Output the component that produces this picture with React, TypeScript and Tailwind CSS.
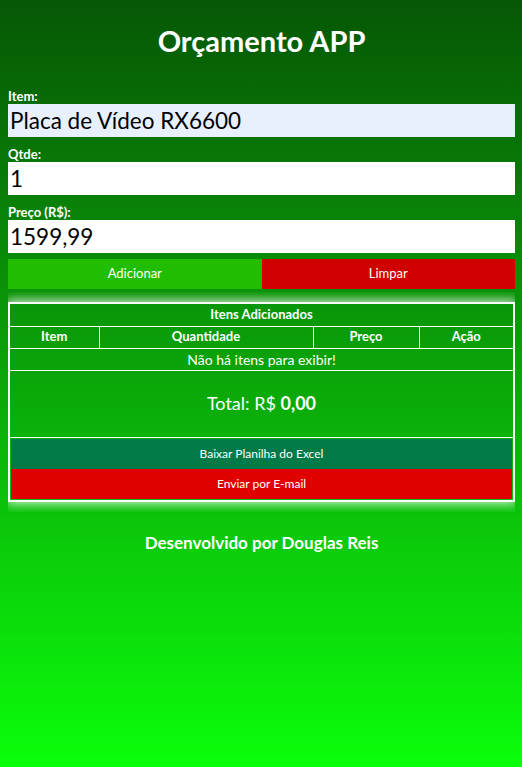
import React from "react"

const font = { fontFamily: "Lato, 'Open Sans', sans-serif" }

function Field({ label, value, autofill }: { label: string; value: string; autofill?: boolean }) {
  return (
    <div className="flex flex-col">
      <label className="text-[13px] font-bold leading-[16px] text-white">{label}</label>
      <input
        readOnly
        value={value}
        className={`h-[33px] w-full px-[2px] text-[22.5px] text-black outline-none ${autofill ? "bg-[#e8f0fe]" : "bg-white"}`}
      />
    </div>
  )
}

export default function App() {
  return (
    <div className="min-h-[767px] bg-gradient-to-b from-[#065705] to-[#0aff0a] pl-2 pr-[7px] pt-[24px]" style={font}>
      <h1 className="text-center text-[29px] font-bold leading-[34px] text-white">Orçamento APP</h1>

      <div className="mt-[30px] flex flex-col gap-[9px]">
        <Field label="Item:" value="Placa de Vídeo RX6600" autofill />
        <Field label="Qtde:" value="1" />
        <Field label="Preço (R$):" value="1599,99" />
      </div>

      <div className="mt-[6px] flex h-[30px]">
        <button className="flex-1 bg-[#20bd00] text-[13px] text-white">Adicionar</button>
        <button className="flex-1 bg-[#d00000] text-[13px] text-white">Limpar</button>
      </div>

      <div className="mt-[3px] overflow-hidden py-[10px]">
        <table className="w-full border-collapse border-2 border-white text-white shadow-[0_0_10px_2px_#ffffffcc]">
          <tbody>
            <tr className="h-[23px]">
              <td colSpan={4} className="border border-white text-center text-[13px] font-bold">Itens Adicionados</td>
            </tr>
            <tr className="h-[22px] text-[13px] font-bold">
              <td className="w-[90px] border border-white text-center">Item</td>
              <td className="w-[214px] border border-white text-center">Quantidade</td>
              <td className="w-[106px] border border-white text-center">Preço</td>
              <td className="border border-white text-center">Ação</td>
            </tr>
            <tr className="h-[22px]">
              <td colSpan={4} className="border border-white text-center text-[14px]">Não há itens para exibir!</td>
            </tr>
            <tr className="h-[67px]">
              <td colSpan={4} className="border border-white text-center text-[18px]">
                Total: R$ <span className="font-bold">0,00</span>
              </td>
            </tr>
            <tr>
              <td colSpan={4} className="border border-white p-0">
                <div className="flex flex-col p-px">
                  <button className="h-[30px] bg-[#007b48] text-[12px] text-white">Baixar Planilha do Excel</button>
                  <button className="h-[30px] bg-[#e00000] text-[12px] text-white">Enviar por E-mail</button>
                </div>
              </td>
            </tr>
          </tbody>
        </table>
      </div>

      <p className="mt-[18px] text-center text-[17px] font-bold text-white">Desenvolvido por Douglas Reis</p>
    </div>
  )
}
